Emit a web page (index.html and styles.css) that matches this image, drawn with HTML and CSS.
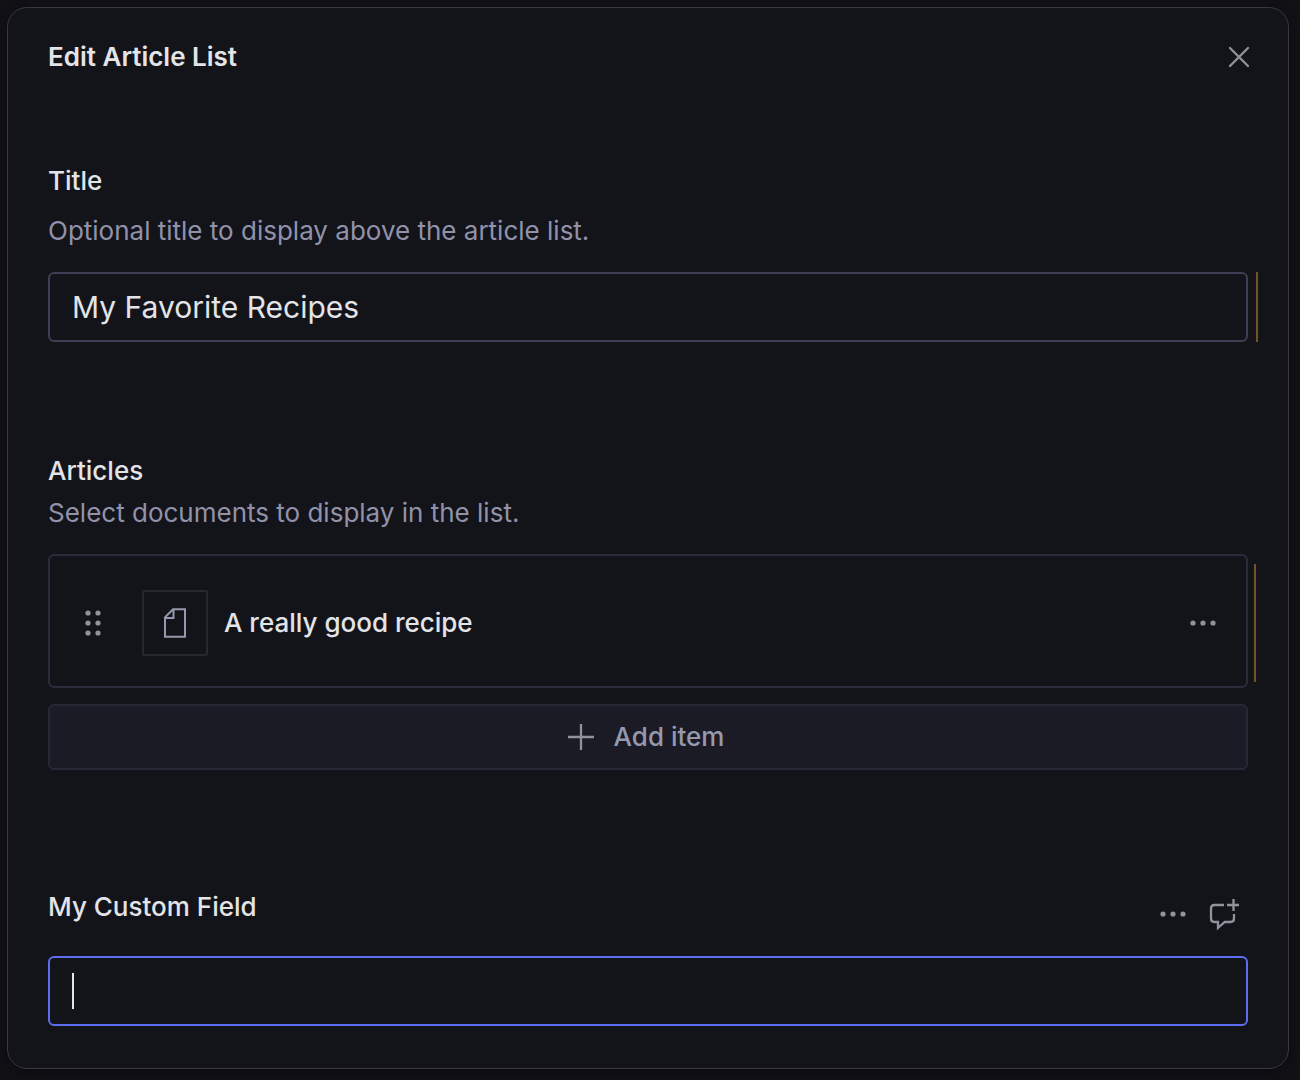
FILE: index.html
```html
<!DOCTYPE html>
<html lang="en">
<head>
<meta charset="utf-8">
<meta name="viewport" content="width=device-width, initial-scale=1">
<title>Edit Article List</title>
<link rel="stylesheet" href="styles.css">
</head>
<body>
<main class="dialog" role="dialog" aria-labelledby="dialog-title">
  <header class="dialog-header">
    <h1 class="dialog-title" id="dialog-title">Edit Article List</h1>
    <button class="icon-button close" type="button" aria-label="Close">
      <svg width="22" height="22" viewBox="0 0 22 22"><path d="M2 2l18 18M20 2l-18 18"/></svg>
    </button>
  </header>

  <form class="fields">
    <section class="field">
      <label class="label" for="title">Title</label>
      <p class="description spaced" id="title-help">Optional title to display above the article list.</p>
      <div class="control changed">
        <input class="text-input" id="title" type="text" value="My Favorite Recipes" aria-describedby="title-help">
      </div>
    </section>

    <section class="field">
      <h2 class="label">Articles</h2>
      <p class="description">Select documents to display in the list.</p>
      <div class="item changed">
        <button class="icon-button drag" type="button" aria-label="Reorder item">
          <svg class="dots" width="18" height="28" viewBox="0 0 18 28"><circle cx="4" cy="4" r="2.6"/><circle cx="14" cy="4" r="2.6"/><circle cx="4" cy="14" r="2.6"/><circle cx="14" cy="14" r="2.6"/><circle cx="4" cy="24" r="2.6"/><circle cx="14" cy="24" r="2.6"/></svg>
        </button>
        <span class="thumb">
          <svg width="24" height="32" viewBox="0 0 24 32"><path d="M10 2.3H22V29.7H2V10.3zM10.500 2.3V11H2"/></svg>
        </span>
        <span class="item-title">A really good recipe</span>
        <button class="icon-button" type="button" aria-label="Item options">
          <svg class="dots" width="28" height="8" viewBox="0 0 28 8"><circle cx="4" cy="4" r="2.6"/><circle cx="14" cy="4" r="2.6"/><circle cx="24" cy="4" r="2.6"/></svg>
        </button>
      </div>
      <button class="add-button" type="button">
        <svg width="26" height="26" viewBox="0 0 26 26"><path d="M13 0v26M0 13h26"/></svg>
        Add item
      </button>
    </section>

    <section class="field">
      <div class="label-row">
        <label class="label" for="custom">My Custom Field</label>
        <div class="actions">
          <button class="icon-button" type="button" aria-label="Field options">
            <svg class="dots" width="28" height="8" viewBox="0 0 28 8"><circle cx="4" cy="4" r="2.6"/><circle cx="14" cy="4" r="2.6"/><circle cx="24" cy="4" r="2.6"/></svg>
          </button>
          <button class="icon-button" type="button" aria-label="Add comment">
            <svg width="32" height="32" viewBox="0 0 32 32"><path d="M16 7H6.500Q3 7 3 10.500V20.500Q3 24 6.500 24H10V30L16.700 24H22.500Q26 24 26 20.500V16M25.500 1V13M19 7H31"/></svg>
          </button>
        </div>
      </div>
      <div class="control">
        <input class="text-input focused" id="custom" type="text">
        <span class="caret" aria-hidden="true"></span>
      </div>
    </section>
  </form>
</main>
</body>
</html>
```
FILE: styles.css
```css
* {
  box-sizing: border-box;
}

body {
  margin: 0;
  padding: 7px 11px 11px 7px;
  background: #111116;
  color: #e3e4e8;
  font: 400 26px/32px Inter, sans-serif;
}

.dialog {
  padding: 32px 40px 42px;
  border: 1px solid #373844;
  border-radius: 20px;
  background: #13141a;
  box-shadow: 0 4px 12px #0c0c11;
}

.dialog-header,
.label-row {
  display: flex;
  align-items: center;
  justify-content: space-between;
}

.dialog-title,
.label {
  display: block;
  margin: 0;
  font-size: 26px;
  font-weight: 500;
  line-height: 32px;
}

.dialog-title {
  font-weight: 600;
}

.icon-button {
  display: flex;
  padding: 0;
  border: 0;
  background: none;
  cursor: pointer;
}

.close {
  padding: 6px 0;
  margin-right: -2px;
}

svg {
  flex: none;
  overflow: visible;
  fill: none;
  stroke: #92929c;
  stroke-width: 2.3;
}

.close svg {
  stroke-linecap: round;
}

.dots {
  fill: #92929c;
  stroke: none;
}

.fields {
  display: flex;
  flex-direction: column;
  gap: 113px;
  margin-top: 91px;
}

.description {
  margin: 10px 0 25px;
  color: #9192aa;
}

.description.spaced {
  margin-top: 18px;
}

.control,
.item {
  position: relative;
}

.text-input {
  display: block;
  width: 100%;
  height: 70px;
  padding: 0 22px;
  border: 2px solid #3d4054;
  border-radius: 6px;
  outline: 0;
  background: transparent;
  color: inherit;
  font: 400 30px/40px Inter, sans-serif;
}

.focused {
  border-color: #5d6df0;
}

.caret {
  position: absolute;
  top: 17px;
  left: 24px;
  width: 2px;
  height: 36px;
  background: #e3e4e8;
}

/* Marks an edited value */
.changed::after {
  content: "";
  position: absolute;
  top: 0;
  right: -10px;
  bottom: 0;
  width: 2px;
  background: #715327;
}

.item {
  display: flex;
  align-items: center;
  padding: 34px 29px 30px 34px;
  border: 2px solid #2b2b3c;
  border-radius: 6px;
}

.item.changed::after {
  top: 8px;
  bottom: 4px;
}

.thumb {
  display: grid;
  place-items: center;
  width: 66px;
  height: 66px;
  margin: 0 16px 0 40px;
  border: 2px solid #27282d;
  border-radius: 2px;
}

.thumb svg {
  stroke: #9499ad;
  stroke-width: 2;
}

.item-title {
  flex: 1;
  font-weight: 500;
}

.add-button {
  display: flex;
  align-items: center;
  justify-content: center;
  gap: 20px;
  width: 100%;
  height: 66px;
  margin-top: 16px;
  padding: 0 4px 0 0;
  border: 2px solid #272735;
  border-radius: 6px;
  background: #1b1b25;
  color: #9499ad;
  font: 500 26px/32px Inter, sans-serif;
  cursor: pointer;
}

.label-row {
  align-items: flex-start;
  margin: 8px 0 26px;
}

.actions {
  display: flex;
  align-items: center;
  gap: 21px;
  padding: 7px 8px 0 0;
}
```
